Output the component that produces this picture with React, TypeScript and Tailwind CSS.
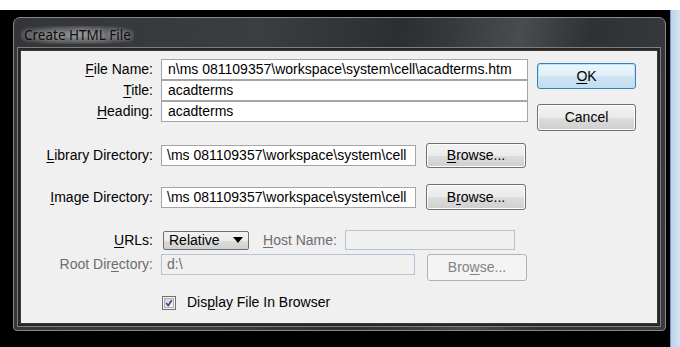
import React from "react";

const F = "font-['Liberation_Sans',Arial,sans-serif]";

function U({ children }: { children: React.ReactNode }) {
  return <span className="underline underline-offset-[2px] decoration-[1px]">{children}</span>;
}

function Label({ children, disabled }: { children: React.ReactNode; disabled?: boolean }) {
  return (
    <div className={`w-[132px] shrink-0 text-right text-[14px] leading-[21px] whitespace-nowrap ${disabled ? "text-[#6d6d6d]" : "text-black"}`}>
      {children}
    </div>
  );
}

function Field({ w, text, pl = "pl-[6px]", disabled }: { w: string; text: string; pl?: string; disabled?: boolean }) {
  return (
    <div
      className={`${w} h-[21px] shrink-0 border ${
        disabled ? "border-[#b4c4d6] bg-[#f0f0f0] text-[#6d6d6d]" : "border-[#a5a5a5] bg-white text-black"
      } ${pl} text-[14px] leading-[19px] whitespace-nowrap overflow-hidden`}
    >
      {text}
    </div>
  );
}

function Btn({ children, w = "w-[100px]", h = "h-[25px]", focused, disabled }: { children: React.ReactNode; w?: string; h?: string; focused?: boolean; disabled?: boolean }) {
  const base = `${w} ${h} shrink-0 rounded-[3px] border flex items-center justify-center text-[14px]`;
  if (disabled)
    return <div className={`${base} border-[#adb2b5] bg-[#f4f4f4] text-[#838383]`}>{children}</div>;
  if (focused)
    return (
      <div className={`${base} border-[#3c7fb1] bg-[linear-gradient(#eaf6fd_0%,#e0eff8_50%,#cfe6f4_51%,#c2dcee_100%)] shadow-[inset_0_0_0_1px_#b9e3f9] text-black`}>
        {children}
      </div>
    );
  return (
    <div className={`${base} border-[#707070] bg-[linear-gradient(#f2f2f2_0%,#ebebeb_50%,#dddddd_51%,#cfcfcf_100%)] shadow-[inset_0_0_0_1px_#fcfcfc] text-black`}>
      {children}
    </div>
  );
}

export default function App() {
  return (
    <div className={`w-[680px] h-[347px] flex flex-col bg-white overflow-hidden ${F}`}>
      <div className="h-[10px] bg-white shrink-0" />
      <div className="flex-1 flex bg-black">
        <div className="w-[13px] shrink-0" />
        {/* window */}
        <div className="mt-[7px] w-[653px] h-[314px] shrink-0 flex flex-col rounded-t-[7px] rounded-b-[4px] border border-[#86898c] bg-[linear-gradient(100deg,#333538_0%,#3b3d40_35%,#2c2e31_55%,#36383b_62%,#4a4c4f_72%,#2f3134_82%,#3a3c3f_100%)] pl-[6px] pr-[7px] pb-[6px]">
          <div className="h-[32px] shrink-0 flex items-start pt-[8px] pl-[1px]">
            <div className="font-['Noto_Sans',sans-serif] text-[13.5px] leading-[18px] text-[#0c0c0c] px-[3px] rounded-[6px] bg-[radial-gradient(ellipse_at_center,rgba(190,190,190,0.6)_0%,rgba(150,150,150,0.4)_55%,rgba(120,120,120,0)_85%)] [text-shadow:0_0_5px_rgba(255,255,255,0.55)]">
              Create HTML File
            </div>
          </div>
          {/* client */}
          <div className="flex-1 border border-[#3a3a3a] bg-[#f0f0f0] shadow-[0_0_0_2px_#262626,0_0_0_3px_#7e7e7e] flex flex-col pt-[8px]">
            <div className="flex items-start">
              <div className="flex flex-col">
                <div className="flex items-center h-[21px]">
                  <Label><U>F</U>ile Name:</Label>
                  <div className="ml-[8px]"><Field w="w-[367px]" text="n\ms 081109357\workspace\system\cell\acadterms.htm" /></div>
                </div>
                <div className="flex items-center h-[21px]">
                  <Label><U>T</U>itle:</Label>
                  <div className="ml-[8px]"><Field w="w-[367px]" text="acadterms" /></div>
                </div>
                <div className="flex items-center h-[21px]">
                  <Label><U>H</U>eading:</Label>
                  <div className="ml-[8px]"><Field w="w-[367px]" text="acadterms" /></div>
                </div>
              </div>
              <div className="ml-[9px] flex flex-col pt-[4px]">
                <Btn w="w-[99px]" h="h-[26px]" focused><U>O</U>K</Btn>
                <div className="mt-[15px]">
                  <Btn w="w-[99px]" h="h-[27px]">Cancel</Btn>
                </div>
              </div>
            </div>

            <div className="flex items-center h-[25px] mt-[12px]">
              <Label><U>L</U>ibrary Directory:</Label>
              <div className="ml-[8px]"><Field w="w-[255px]" pl="pl-[5px]" text="\ms 081109357\workspace\system\cell" /></div>
              <div className="ml-[10px]"><Btn><U>B</U>rowse...</Btn></div>
            </div>

            <div className="flex items-center h-[26px] mt-[16px]">
              <Label><U>I</U>mage Directory:</Label>
              <div className="ml-[8px]"><Field w="w-[255px]" pl="pl-[5px]" text="\ms 081109357\workspace\system\cell" /></div>
              <div className="ml-[10px]"><Btn h="h-[26px]">B<U>r</U>owse...</Btn></div>
            </div>

            <div className="flex items-center h-[20px] mt-[20px]">
              <Label><U>U</U>RLs:</Label>
              <div className="ml-[10px] w-[86px] h-[19px] shrink-0 rounded-[2px] border border-[#707070] bg-[linear-gradient(#f2f2f2_0%,#ebebeb_50%,#dddddd_51%,#cfcfcf_100%)] flex items-center pl-[5px] pr-[5px] text-[14px] text-black">
                <span className="flex-1">Relative</span>
                <svg width="10" height="6" viewBox="0 0 10 6"><path d="M0 0 L10 0 L5 6 Z" fill="#000" /></svg>
              </div>
              <div className="ml-[14px] text-[14px] leading-[20px] text-[#6d6d6d] whitespace-nowrap"><U>H</U>ost Name:</div>
              <div className="ml-[8px]"><div className="w-[170px] h-[20px] border border-[#b4c4d6] bg-[#f0f0f0]" /></div>
            </div>

            <div className="flex items-start h-[27px] mt-[4px]">
              <Label disabled>Root Dir<U>e</U>ctory:</Label>
              <div className="ml-[8px]"><Field w="w-[254px]" pl="pl-[5px]" text="d:\" disabled /></div>
              <div className="ml-[12px]"><Btn h="h-[27px]" disabled>Bro<U>w</U>se...</Btn></div>
            </div>

            <div className="flex items-center h-[15px] mt-[14px]">
              <div className="w-[141px] shrink-0" />
              <div className="w-[14px] h-[14px] shrink-0 border border-[#707070] bg-[#f4f4f4] p-[1px]">
                <div className="w-full h-full border border-[#b0b0b0] bg-[linear-gradient(135deg,#cfcfcf,#f6f6f6)] flex items-center justify-center">
                  <svg width="10" height="10" viewBox="0 0 10 10">
                    <path d="M1.5 5 L4 8 L8.5 1.5" fill="none" stroke="#2c4a8c" strokeWidth="2" />
                  </svg>
                </div>
              </div>
              <div className="ml-[11px] text-[14px] leading-[15px] text-black whitespace-nowrap">Dis<U>p</U>lay File In Browser</div>
            </div>
          </div>
        </div>
        <div className="flex-1" />
        <div className="w-[10px] shrink-0 border-l border-[#7c9cc4] bg-[linear-gradient(90deg,#bcd2ec,#d4e3f4)]" />
      </div>
    </div>
  );
}
